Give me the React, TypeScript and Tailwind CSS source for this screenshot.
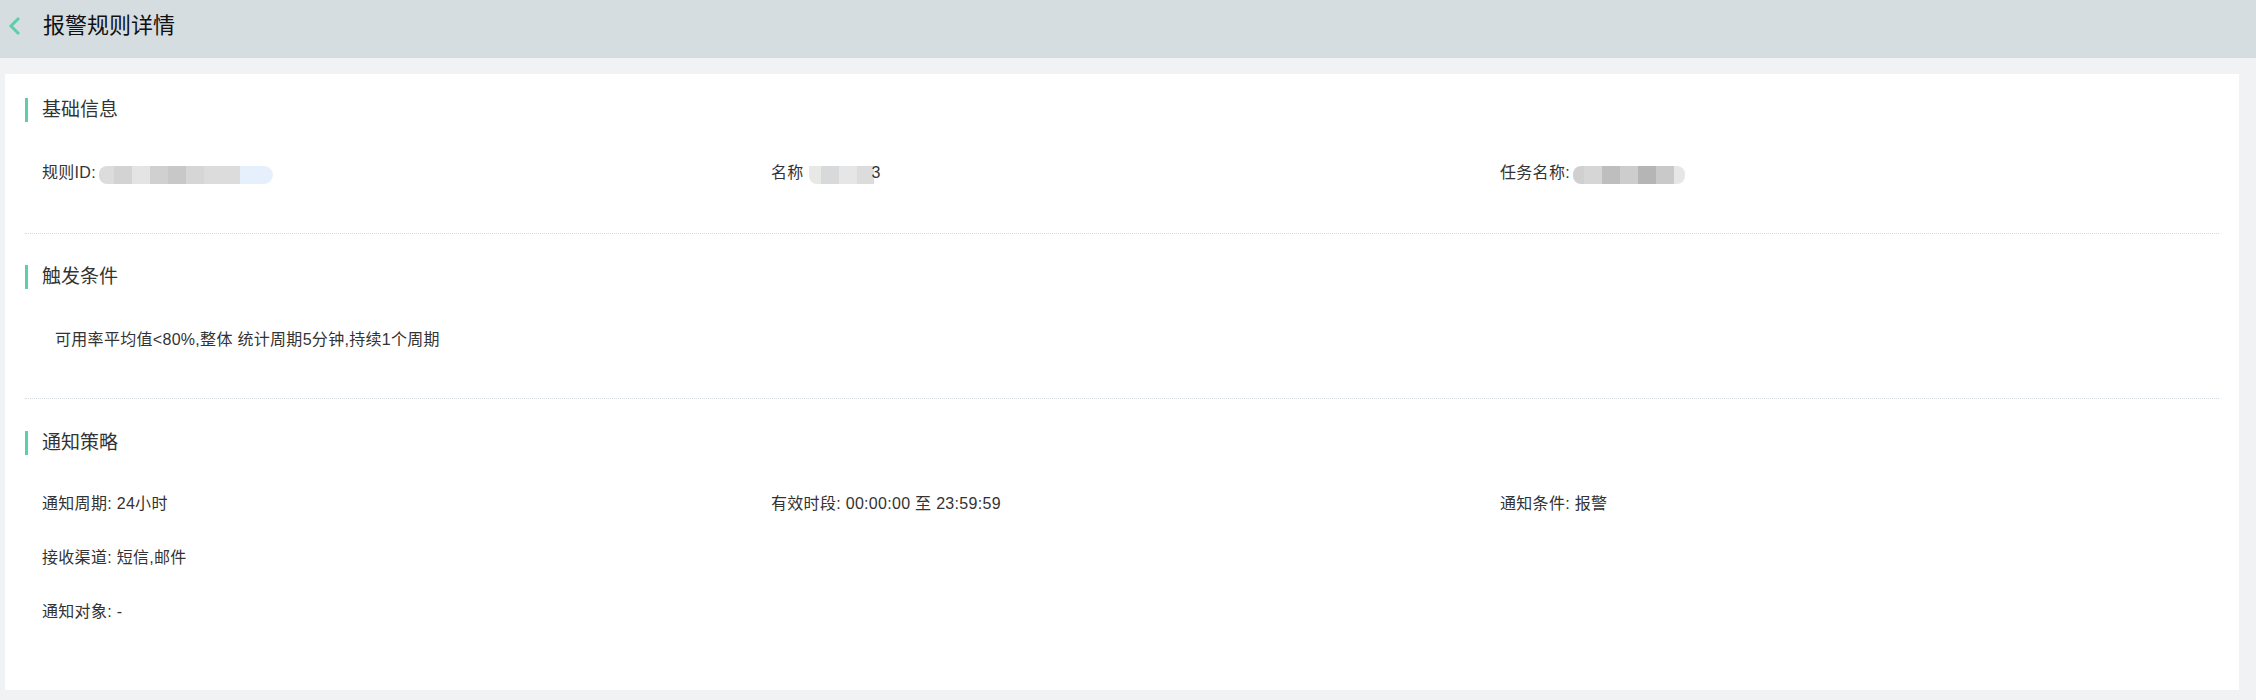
import React from "react"

const font = "font-['Liberation_Sans','Noto_Sans_CJK_SC',sans-serif]"

function SectionTitle({ title }: { title: string }) {
  return (
    <div className="flex h-[24px] items-center">
      <div className="h-[24px] w-[3px] bg-[#5ccfa9]" />
      <div className="ml-[14px] text-[19px] leading-[24px] text-[#333]">{title}</div>
    </div>
  )
}

function Mosaic({ blocks }: { blocks: string[] }) {
  return (
    <div className="flex h-[18px] items-stretch">
      {blocks.map((b, i) => (
        <div key={i} className={b} />
      ))}
    </div>
  )
}

const ruleIdBlocks = [
  "w-[15px] bg-[#dcdcdc] rounded-l-[8px]",
  "w-[18px] bg-[#d3d3d3]",
  "w-[18px] bg-[#e4e4e4]",
  "w-[18px] bg-[#d0d0d0]",
  "w-[18px] bg-[#c8c8c8]",
  "w-[18px] bg-[#d6d6d6]",
  "w-[36px] bg-[#dcdcdc]",
  "w-[33px] bg-[#e6f0fc] rounded-r-[10px]",
]

const nameBlocks = [
  "w-[12px] bg-[#e8e8e6] rounded-bl-[8px]",
  "w-[18px] bg-[#d8d9db]",
  "w-[18px] bg-[#e6e6e6]",
  "w-[17px] bg-[#dcdcdc]",
]

const taskBlocks = [
  "w-[11px] bg-[#d0d0d0] rounded-l-[8px]",
  "w-[18px] bg-[#d6d6d6]",
  "w-[18px] bg-[#bebebe]",
  "w-[18px] bg-[#cdcdcd]",
  "w-[18px] bg-[#b5b5b5]",
  "w-[18px] bg-[#c9c9c9]",
  "w-[11px] bg-[#e6e6e6] rounded-r-[8px]",
]

function Item({ children }: { children: React.ReactNode }) {
  return (
    <div className="flex h-[20px] items-center whitespace-pre text-[16px] leading-[20px] tracking-[0.3px] text-[#333]">
      {children}
    </div>
  )
}

export default function App() {
  return (
    <div className={`${font} min-h-[700px] w-full bg-[#f1f2f4]`}>
      <div className="flex h-[58px] items-center bg-[#d5dde1] pb-[6px]">
        <svg width="14" height="20" viewBox="0 0 14 20" className="ml-[8px]">
          <polyline points="11,2 3,10 11,18" fill="none" stroke="#5ccfa9" strokeWidth="3" />
        </svg>
        <div className="ml-[21px] text-[22px] leading-[26px] text-[#111]">报警规则详情</div>
      </div>

      <div className="pl-[5px] pr-[17px] pt-[16px] pb-[10px]">
        <div className="bg-white px-[20px] pb-[68px]">
          <div className="border-b border-dotted border-[#d6dbe0] pt-[24px] pb-[50px]">
            <SectionTitle title="基础信息" />
            <div className="mt-[41px] grid grid-cols-[729px_729px_1fr] pl-[17px]">
              <Item>
                规则ID:
                <div className="ml-[3px] mt-[4px]">
                  <Mosaic blocks={ruleIdBlocks} />
                </div>
              </Item>
              <Item>
                名称
                <div className="ml-[5px] mt-[4px]">
                  <Mosaic blocks={nameBlocks} />
                </div>
                <span className="-ml-[2px]">3</span>
              </Item>
              <Item>
                任务名称: 
                <div className="ml-[3px] mt-[4px]">
                  <Mosaic blocks={taskBlocks} />
                </div>
              </Item>
            </div>
          </div>

          <div className="border-b border-dotted border-[#d6dbe0] pt-[31px] pb-[48px]">
            <SectionTitle title="触发条件" />
            <div className="mt-[41px] pl-[30px]">
              <Item>可用率平均值&lt;80%,整体 统计周期5分钟,持续1个周期</Item>
            </div>
          </div>

          <div className="pt-[32px]">
            <SectionTitle title="通知策略" />
            <div className="mt-[39px] flex flex-col gap-y-[34px] pl-[17px]">
              <div className="grid grid-cols-[729px_729px_1fr]">
                <Item>通知周期: 24小时</Item>
                <Item>有效时段: 00:00:00 至 23:59:59</Item>
                <Item>通知条件: 报警</Item>
              </div>
              <Item>接收渠道: 短信,邮件</Item>
              <Item>通知对象: -</Item>
            </div>
          </div>
        </div>
      </div>
    </div>
  )
}
